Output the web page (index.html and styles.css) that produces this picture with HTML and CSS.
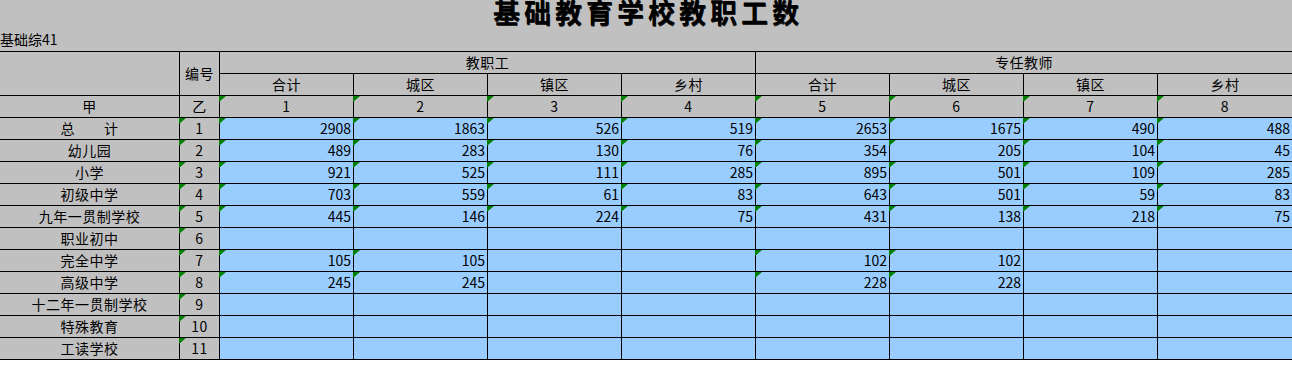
FILE: index.html
```html
<!DOCTYPE html>
<html lang="zh-CN">
<head>
<meta charset="utf-8">
<title>基础教育学校教职工数</title>
<link rel="stylesheet" href="styles.css">
</head>
<body>
<div class="sheet">
  <div class="title">基础教育学校教职工数</div>
  <div class="code">基础综41</div>
  <div class="grid">
    <div class="c hdr-a"></div>
    <div class="c hdr-b">编号</div>
    <div class="c span4">教职工</div>
    <div class="c span4 last">专任教师</div>

    <div class="c">合计</div><div class="c">城区</div><div class="c">镇区</div><div class="c">乡村</div>
    <div class="c">合计</div><div class="c">城区</div><div class="c">镇区</div><div class="c last">乡村</div>

    <div class="c">甲</div><div class="c">乙</div>
    <div class="c t">1</div><div class="c t">2</div><div class="c t">3</div><div class="c t">4</div>
    <div class="c t">5</div><div class="c t">6</div><div class="c t">7</div><div class="c t last">8</div>

    <div class="c lbl">总　　计</div><div class="c t">1</div>
    <div class="c n t">2908</div><div class="c n t">1863</div><div class="c n t">526</div><div class="c n t">519</div>
    <div class="c n t">2653</div><div class="c n t">1675</div><div class="c n t">490</div><div class="c n t last">488</div>

    <div class="c lbl">幼儿园</div><div class="c t">2</div>
    <div class="c n t">489</div><div class="c n t">283</div><div class="c n t">130</div><div class="c n t">76</div>
    <div class="c n t">354</div><div class="c n t">205</div><div class="c n t">104</div><div class="c n t last">45</div>

    <div class="c lbl">小学</div><div class="c t">3</div>
    <div class="c n t">921</div><div class="c n t">525</div><div class="c n t">111</div><div class="c n t">285</div>
    <div class="c n t">895</div><div class="c n t">501</div><div class="c n t">109</div><div class="c n t last">285</div>

    <div class="c lbl">初级中学</div><div class="c t">4</div>
    <div class="c n t">703</div><div class="c n t">559</div><div class="c n t">61</div><div class="c n t">83</div>
    <div class="c n t">643</div><div class="c n t">501</div><div class="c n t">59</div><div class="c n t last">83</div>

    <div class="c lbl">九年一贯制学校</div><div class="c t">5</div>
    <div class="c n t">445</div><div class="c n t">146</div><div class="c n t">224</div><div class="c n t">75</div>
    <div class="c n t">431</div><div class="c n t">138</div><div class="c n t">218</div><div class="c n t last">75</div>

    <div class="c lbl">职业初中</div><div class="c t">6</div>
    <div class="c n"></div><div class="c n"></div><div class="c n"></div><div class="c n"></div>
    <div class="c n"></div><div class="c n"></div><div class="c n"></div><div class="c n last"></div>

    <div class="c lbl">完全中学</div><div class="c t">7</div>
    <div class="c n t">105</div><div class="c n t">105</div><div class="c n"></div><div class="c n"></div>
    <div class="c n t">102</div><div class="c n t">102</div><div class="c n"></div><div class="c n last"></div>

    <div class="c lbl">高级中学</div><div class="c t">8</div>
    <div class="c n t">245</div><div class="c n t">245</div><div class="c n"></div><div class="c n"></div>
    <div class="c n t">228</div><div class="c n t">228</div><div class="c n"></div><div class="c n last"></div>

    <div class="c lbl">十二年一贯制学校</div><div class="c t">9</div>
    <div class="c n"></div><div class="c n"></div><div class="c n"></div><div class="c n"></div>
    <div class="c n"></div><div class="c n"></div><div class="c n"></div><div class="c n last"></div>

    <div class="c lbl">特殊教育</div><div class="c t">10</div>
    <div class="c n"></div><div class="c n"></div><div class="c n"></div><div class="c n"></div>
    <div class="c n"></div><div class="c n"></div><div class="c n"></div><div class="c n last"></div>

    <div class="c lbl">工读学校</div><div class="c t">11</div>
    <div class="c n"></div><div class="c n"></div><div class="c n"></div><div class="c n"></div>
    <div class="c n"></div><div class="c n"></div><div class="c n"></div><div class="c n last"></div>
  </div>
</div>
</body>
</html>
```

FILE: styles.css
```css
html, body {
  margin: 0;
  padding: 0;
  background: #ffffff;
}

body {
  font-family: "Noto Sans CJK SC", "Liberation Sans", sans-serif;
  font-size: 14px;
  color: #000;
}

.sheet {
  width: 1292px;
  background: #c0c0c0;
  overflow: hidden;
}

.title {
  box-sizing: border-box;
  height: 26px;
  padding-top: 1px;
  padding-left: 4px;
  line-height: 22px;
  font-size: 27px;
  font-weight: bold;
  letter-spacing: 4px;
  text-align: center;
  white-space: nowrap;
  text-shadow: 0.5px 0.5px 0 #222;
}

.code {
  box-sizing: border-box;
  height: 25px;
  padding-top: 2px;
  line-height: 22px;
  font-size: 14px;
  white-space: nowrap;
}

.grid {
  display: grid;
  grid-template-columns: 180px 40px repeat(8, 134px);
  grid-auto-rows: 22px;
  border-top: 1px solid #000;
}

.c {
  position: relative;
  box-sizing: border-box;
  border-right: 1px solid #000;
  border-bottom: 1px solid #000;
  line-height: 21px;
  text-align: center;
  white-space: pre;
  letter-spacing: 0.5px;
}

.c.last {
  border-right: none;
}

.hdr-a {
  grid-row: span 2;
}

.hdr-b {
  grid-row: span 2;
  line-height: 43px;
}

.span4 {
  grid-column: span 4;
}

.n {
  background: #99ccff;
  text-align: right;
  padding-right: 2px;
  letter-spacing: 0;
}

.t::before {
  content: "";
  position: absolute;
  left: -1px;
  top: 0;
  width: 7px;
  height: 6px;
  background: #008000;
  clip-path: polygon(0 0, 100% 0, 0 100%);
  z-index: 1;
}
```
